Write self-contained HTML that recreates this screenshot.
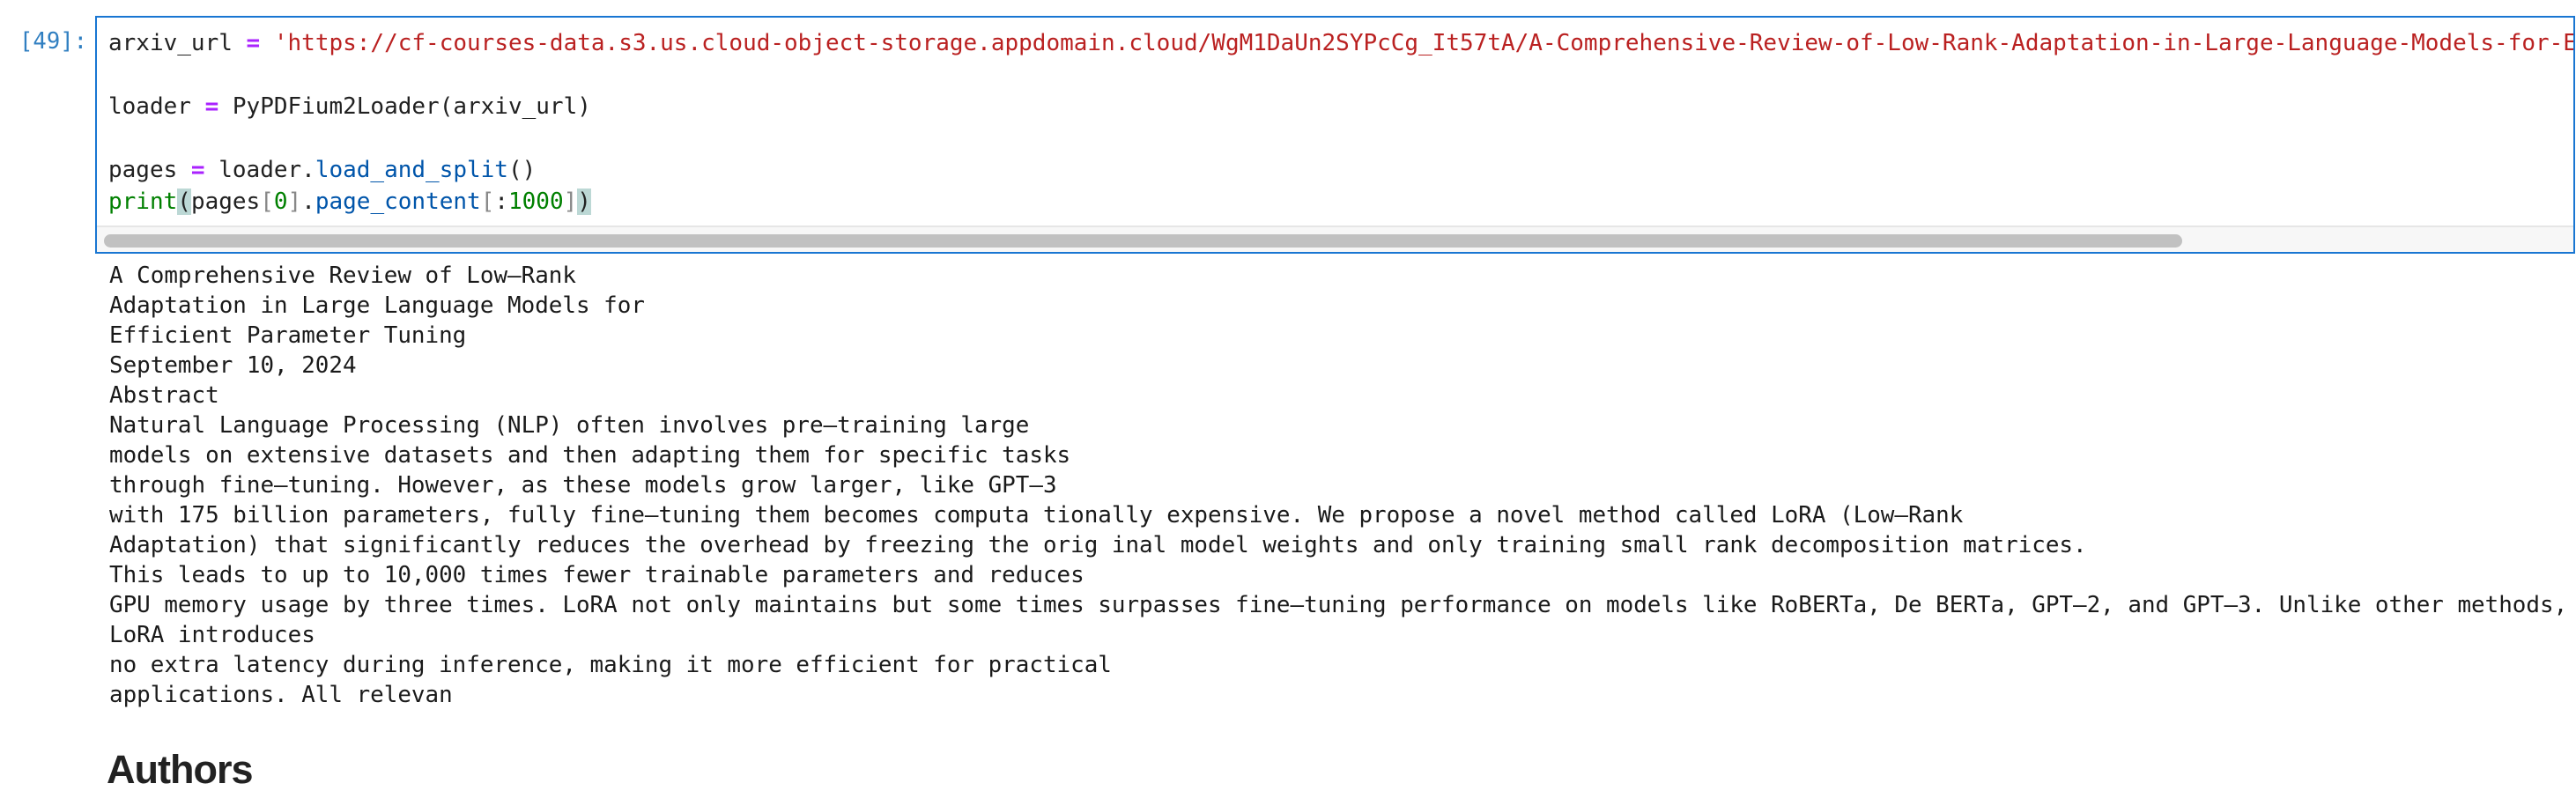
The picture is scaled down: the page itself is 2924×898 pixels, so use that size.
<!DOCTYPE html>
<html><head><meta charset="utf-8"><style>
html,body{margin:0;padding:0;background:#fff;width:2924px;height:898px;overflow:hidden;position:relative}
.mono{font-family:"DejaVu Sans Mono","Liberation Mono",monospace;white-space:pre}
.prompt{position:absolute;left:22px;top:29px;font-size:25.6px;line-height:36px;color:#307fc1}
.cell{position:absolute;left:108px;top:18px;width:2811px;height:266px;border:2px solid #1976d2;box-sizing:content-box;background:#fff;overflow:hidden}
.code{position:absolute;left:13px;top:11px;font-size:26px;line-height:36px;color:#212121}
.str{color:#ba2121}.op{color:#aa22ff;font-weight:bold}.fn{color:#0055aa}.bi{color:#008000}.num{color:#008000}.br{color:#888}
.hl{background:#bcd8d5}
.track{position:absolute;left:0;right:0;top:236px;height:30px;background:#f7f7f7;border-top:2px solid #e6e6e6}
.thumb{position:absolute;left:8px;top:8px;width:2359px;height:15px;background:#c1c1c1;border-radius:8px}
.out{position:absolute;left:124px;top:296px;font-size:25.9px;line-height:34px;color:#1a1a1a}
.h{position:absolute;left:121px;top:848px;font-family:"Liberation Sans",sans-serif;font-size:45px;font-weight:bold;color:#222;letter-spacing:-1px}
</style></head><body>
<div class="prompt mono">[49]:</div>
<div class="cell">
<div class="code mono">arxiv_url <span class="op">=</span> <span class="str">'https://cf-courses-data.s3.us.cloud-object-storage.appdomain.cloud/WgM1DaUn2SYPcCg_It57tA/A-Comprehensive-Review-of-Low-Rank-Adaptation-in-Large-Language-Models-for-Efficient-Parameter-Tuning.pdf'</span>

loader <span class="op">=</span> PyPDFium2Loader(arxiv_url)

pages <span class="op">=</span> loader<span>.</span><span class="fn">load_and_split</span>()
<span class="bi">print</span><span class="hl">(</span>pages<span class="br">[</span><span class="num">0</span><span class="br">]</span>.<span class="fn">page_content</span><span class="br">[</span>:<span class="num">1000</span><span class="br">]</span><span class="hl">)</span></div>
<div class="track"><div class="thumb"></div></div>
</div>
<div class="out mono">A Comprehensive Review of Low–Rank
Adaptation in Large Language Models for
Efficient Parameter Tuning
September 10, 2024
Abstract
Natural Language Processing (NLP) often involves pre–training large
models on extensive datasets and then adapting them for specific tasks
through fine–tuning. However, as these models grow larger, like GPT–3
with 175 billion parameters, fully fine–tuning them becomes computa tionally expensive. We propose a novel method called LoRA (Low–Rank
Adaptation) that significantly reduces the overhead by freezing the orig inal model weights and only training small rank decomposition matrices.
This leads to up to 10,000 times fewer trainable parameters and reduces
GPU memory usage by three times. LoRA not only maintains but some times surpasses fine–tuning performance on models like RoBERTa, De BERTa, GPT–2, and GPT–3. Unlike other methods,
LoRA introduces
no extra latency during inference, making it more efficient for practical
applications. All relevan</div>
<div class="h">Authors</div>
</body></html>
